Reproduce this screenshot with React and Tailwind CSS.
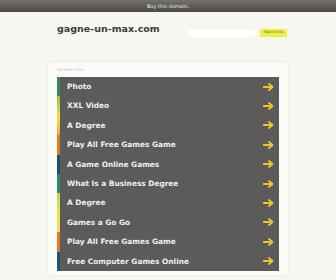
import React from 'react';

const links = [
    { label: 'Photo', strip: 'bg-[#2f8a5e]' },
    { label: 'XXL Video', strip: 'bg-gradient-to-b from-[#8cc63f] to-[#e8e04a]' },
    { label: 'A Degree', strip: 'bg-gradient-to-b from-[#f0e24a] to-[#f0a830]' },
    { label: 'Play All Free Games Game', strip: 'bg-[#e07b22]' },
    { label: 'A Game Online Games', strip: 'bg-[#1f4f6e]' },
    { label: 'What Is a Business Degree', strip: 'bg-[#2e8a78]' },
    { label: 'A Degree', strip: 'bg-gradient-to-b from-[#b8d84a] to-[#eee250]' },
    { label: 'Games a Go Go', strip: 'bg-[#f0e050]' },
    { label: 'Play All Free Games Game', strip: 'bg-[#e07b22]' },
    { label: 'Free Computer Games Online', strip: 'bg-[#1f5576]' },
];

const Arrow = () => (
    <svg width="11" height="8" viewBox="0 0 11 8" className="shrink-0">
        <path d="M0.5 4 H9 M6 1 L9.5 4 L6 7" stroke="#f2c230" strokeWidth="1.8" fill="none" strokeLinecap="round" strokeLinejoin="round" />
    </svg>
);

const App = () => {
    return (
        <div className="w-[336px] h-[280px] overflow-hidden bg-[#f7f7f1]" style={{ fontFamily: '"DejaVu Sans", Verdana, sans-serif' }}>
            {/* top bar */}
            <div className="h-[12px] bg-gradient-to-b from-[#76716e] to-[#4d4947] flex items-center justify-center">
                <span className="text-[5px] text-[#e8e8e8] leading-none">Buy this domain.</span>
            </div>

            {/* header */}
            <div className="flex items-start justify-between pl-[57px] pr-[49px] pt-[12px] h-[36px]">
                <h1 className="text-[9.5px] font-bold text-[#3a3a3a] leading-none">gagne-un-max.com</h1>
                <div className="flex items-center gap-[5px] mt-[5px]">
                    <div className="w-[67px] h-[7px] bg-white" />
                    <div className="w-[27px] h-[8px] bg-[#eeee44] flex items-center justify-center">
                        <span className="text-[3.5px] text-[#666] leading-none">Search Ads</span>
                    </div>
                </div>
            </div>

            {/* panel */}
            <div className="mx-[47px] mt-[13px] h-[215px] bg-[#fbfbf8] border border-[#ececea] rounded-[5px] px-[9px] pt-[6px]">
                <div className="text-[4px] text-[#c8c8c4] leading-none h-[9px]">Related Links</div>
                <div className="bg-[#5b5b5b]">
                    {links.map((l, i) => (
                        <div key={i} className="flex h-[19.4px]">
                            <div className={`w-[3px] ${l.strip}`} />
                            <div className="flex-1 flex items-center justify-between pl-[7px] pr-[5px]">
                                <span className="text-[7.4px] font-bold text-[#f0f0f0] leading-none">{l.label}</span>
                                <Arrow />
                            </div>
                        </div>
                    ))}
                </div>
            </div>
        </div>
    );
};

export default App;
